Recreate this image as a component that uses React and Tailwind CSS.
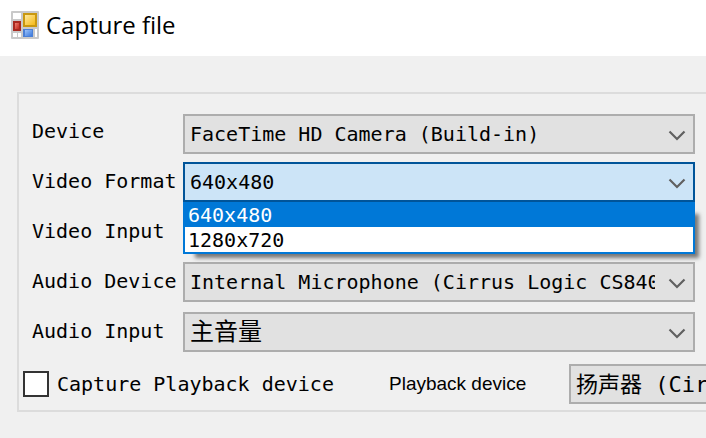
import { useState } from 'react'

const FORMATS = ['640x480', '1280x720']

const selectBase =
  "block h-10 w-full appearance-none rounded-none border-2 pl-[5px] pr-[38px] font-['DejaVu_Sans_Mono','Noto_Sans_CJK_SC',monospace] text-black outline-none"

function FormIcon() {
  return (
    <svg className="size-7 shrink-0" viewBox="0 0 28 28" aria-hidden="true">
      <defs>
        <linearGradient id="gold" x1="0" y1="0" x2="1" y2="1">
          <stop offset="0" stopColor="#ffe9a0" />
          <stop offset="1" stopColor="#f5b914" />
        </linearGradient>
        <linearGradient id="blue" x1="0" y1="0" x2="1" y2="1">
          <stop offset="0" stopColor="#9cc3fa" />
          <stop offset="1" stopColor="#3a78dc" />
        </linearGradient>
        <linearGradient id="red" x1="0" y1="0" x2="1" y2="1">
          <stop offset="0" stopColor="#ee8070" />
          <stop offset="1" stopColor="#c0281c" />
        </linearGradient>
      </defs>
      <rect width="28" height="28" rx="1" fill="#c9c9c9" />
      <rect x="2" y="2" width="8" height="6" fill="#fff" />
      <rect x="2" y="22" width="4" height="4" fill="#fff" />
      <rect x="7" y="22" width="3" height="4" fill="#fff" />
      <rect x="24" y="18" width="2" height="8" fill="#fff" />
      <rect x="12" y="2" width="14" height="14" fill="#c9980f" />
      <rect x="14" y="4" width="10" height="10" fill="url(#gold)" />
      <rect x="2" y="10" width="8" height="10" fill="#a82a20" />
      <rect x="4" y="12" width="4" height="6" fill="url(#red)" />
      <rect x="12" y="18" width="10" height="8" fill="#4a7fd6" />
      <rect x="14" y="19" width="7" height="6" fill="url(#blue)" />
    </svg>
  )
}

function ComboBox({ id, value, options, onChange, active, size = 'text-[20px]', children }) {
  const tone = active ? 'border-[#005499] bg-[#cce4f7]' : 'border-[#adadad] bg-[#e1e1e1]'
  return (
    <div className="relative">
      <select
        id={id}
        value={value}
        onChange={e => onChange && onChange(e.target.value)}
        className={`${selectBase} ${size} ${tone}`}
      >
        {options.map(o => <option key={o}>{o}</option>)}
      </select>
      <svg
        className="pointer-events-none absolute right-[9px] top-4 h-3 w-[18px]"
        viewBox="0 0 18 12"
        fill="none"
        stroke="#606060"
        strokeWidth="2.2"
        aria-hidden="true"
      >
        <path d="M1.5 1.5 9 9 16.5 1.5" />
      </svg>
      {children}
    </div>
  )
}

export default function App() {
  const [format, setFormat] = useState('640x480')
  const [capture, setCapture] = useState(false)

  const mic = 'Internal Microphone (Cirrus Logic CS8409 (AB 57))'

  return (
    <div className="min-h-screen overflow-hidden bg-[#f0f0f0] font-['DejaVu_Sans_Mono','Noto_Sans_CJK_SC',monospace] text-[20px] text-black">
      <header className="flex h-14 items-center gap-[7px] bg-white px-[11px] pb-1.5">
        <FormIcon />
        <h1 className="font-['Open_Sans',sans-serif] text-[24px] leading-8">Capture file</h1>
      </header>

      <main className="ml-[17px] mt-9 border-2 border-r-0 border-[#dcdcdc] pb-1.5">
        <div className="flex pr-[11px] pt-3">
          <div className="flex w-[164px] shrink-0 flex-col whitespace-nowrap pl-[13px] leading-[50px]">
            <label htmlFor="device">Device</label>
            <label htmlFor="format">Video Format</label>
            <label htmlFor="vinput">Video Input</label>
            <label htmlFor="adevice">Audio Device</label>
            <label htmlFor="ainput">Audio Input</label>
          </div>

          <div className="flex min-w-0 flex-1 flex-col gap-2 pt-2">
            <ComboBox id="device" options={['FaceTime HD Camera (Build-in)']} />
            <div className="flex flex-col gap-2.5">
              <ComboBox id="format" active value={format} options={FORMATS} onChange={setFormat}>
                <div
                  role="listbox"
                  aria-label="Video Format"
                  className="absolute inset-x-0 top-full z-10 flex flex-col border-2 border-t-0 border-[#0078d7] bg-white shadow-[8px_8px_4px_-4px_rgba(0,0,0,0.5)]"
                >
                  {FORMATS.map(f => (
                    <button
                      key={f}
                      type="button"
                      role="option"
                      aria-selected={f === format}
                      onClick={() => setFormat(f)}
                      className={`h-[25px] pl-[3px] text-left leading-[27px] ${f === format ? 'bg-[#0078d7] text-white' : 'text-black'}`}
                    >
                      {f}
                    </button>
                  ))}
                </div>
              </ComboBox>
              <ComboBox id="vinput" options={['']} />
              <ComboBox id="adevice" options={[mic]} />
              <ComboBox id="ainput" size="text-[24px]" options={['主音量']} />
            </div>
          </div>
        </div>

        <div className="flex items-center whitespace-nowrap pl-1 pt-2">
          <input
            id="capture"
            type="checkbox"
            checked={capture}
            onChange={e => setCapture(e.target.checked)}
            className="size-[26px] shrink-0 appearance-none border-2 border-[#333] bg-white checked:bg-[#333]"
          />
          <label htmlFor="capture" className="w-[340px] shrink-0 pl-2">Capture Playback device</label>
          <label htmlFor="playback" className="w-[180px] shrink-0 font-['Liberation_Sans',sans-serif] text-[19px]">
            Playback device
          </label>
          <div className="w-[320px] shrink-0">
            <ComboBox id="playback" size="text-[22px]" options={['扬声器 (Cirrus Logic)']} />
          </div>
        </div>
      </main>
    </div>
  )
}
